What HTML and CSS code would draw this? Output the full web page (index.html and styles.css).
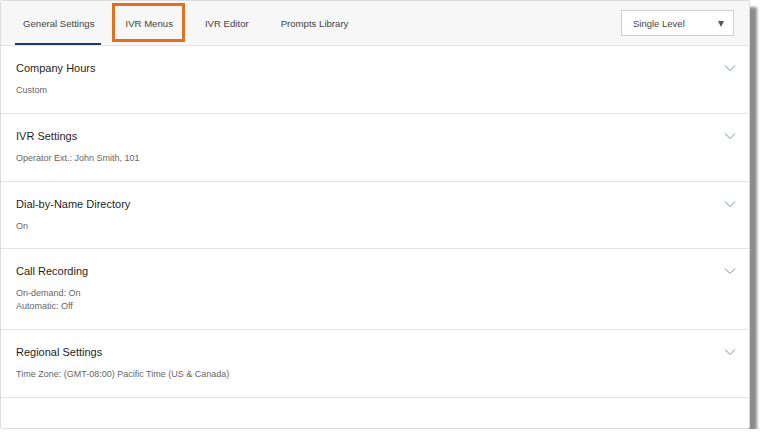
FILE: index.html
```html
<!DOCTYPE html>
<html>
<head>
<meta charset="utf-8">
<link rel="stylesheet" href="styles.css">
</head>
<body>
<div class="panel">
  <div class="header">
    <nav class="tabs">
      <div class="tab active">General Settings</div>
      <div class="tab highlighted">IVR Menus<span class="callout"></span></div>
      <div class="tab">IVR Editor</div>
      <div class="tab">Prompts Library</div>
    </nav>
    <div class="dropdown"><span>Single Level</span><span class="caret"></span></div>
  </div>
  <div class="section">
    <div class="info">
      <div class="title">Company Hours</div>
      <div class="line">Custom</div>
    </div>
    <svg class="chev" width="12" height="8" viewBox="0 0 12 8"><path d="M1 1.5 L6 6.5 L11 1.5" fill="none" stroke="#7d8aa6" stroke-width="1"/></svg>
  </div>
  <div class="section">
    <div class="info">
      <div class="title">IVR Settings</div>
      <div class="line">Operator Ext.: John Smith, 101</div>
    </div>
    <svg class="chev" width="12" height="8" viewBox="0 0 12 8"><path d="M1 1.5 L6 6.5 L11 1.5" fill="none" stroke="#7d8aa6" stroke-width="1"/></svg>
  </div>
  <div class="section">
    <div class="info">
      <div class="title">Dial-by-Name Directory</div>
      <div class="line">On</div>
    </div>
    <svg class="chev" width="12" height="8" viewBox="0 0 12 8"><path d="M1 1.5 L6 6.5 L11 1.5" fill="none" stroke="#7d8aa6" stroke-width="1"/></svg>
  </div>
  <div class="section">
    <div class="info">
      <div class="title">Call Recording</div>
      <div class="line">On-demand: On</div>
      <div class="line">Automatic: Off</div>
    </div>
    <svg class="chev" width="12" height="8" viewBox="0 0 12 8"><path d="M1 1.5 L6 6.5 L11 1.5" fill="none" stroke="#7d8aa6" stroke-width="1"/></svg>
  </div>
  <div class="section">
    <div class="info">
      <div class="title">Regional Settings</div>
      <div class="line">Time Zone: (GMT-08:00) Pacific Time (US &amp; Canada)</div>
    </div>
    <svg class="chev" width="12" height="8" viewBox="0 0 12 8"><path d="M1 1.5 L6 6.5 L11 1.5" fill="none" stroke="#7d8aa6" stroke-width="1"/></svg>
  </div>
</div>
</body>
</html>
```
FILE: styles.css
```css
html, body {
  margin: 0;
  padding: 0;
  background: #ffffff;
}
body {
  font-family: "Liberation Sans", Arial, sans-serif;
  color: #333;
}
.panel {
  width: 748px;
  height: 427px;
  border: 1px solid #dcdcdc;
  border-radius: 2px;
  background: #fff;
  box-shadow: 7px 7px 3px rgba(0, 0, 0, 0.45);
  display: flex;
  flex-direction: column;
}
.header {
  height: 44px;
  flex: none;
  background: #f7f7f7;
  border-bottom: 1px solid #e3e3e3;
  display: flex;
  align-items: center;
  justify-content: space-between;
  padding: 0 15px 0 6px;
}
.tabs {
  display: flex;
  height: 100%;
}
.tab {
  position: relative;
  margin: 0 8px;
  padding: 0 8px;
  display: flex;
  align-items: center;
  font-size: 9.6px;
  color: #444;
  box-sizing: border-box;
  height: 100%;
}
.tab.active {
  border-bottom: 2px solid #1f3a5a;
  padding-top: 2px;
  padding-right: 7px;
}
.callout {
  position: absolute;
  left: -5px;
  right: -4px;
  top: 2px;
  bottom: 3px;
  border: 3px solid #e3701c;
}
.dropdown {
  height: 24px;
  border: 1px solid #cfcfcf;
  background: #fff;
  display: flex;
  align-items: center;
  justify-content: space-between;
  padding: 0 8px 0 11px;
  width: 92px;
  font-size: 9.5px;
  color: #444;
}
.caret {
  width: 0;
  height: 0;
  border-left: 3.5px solid transparent;
  border-right: 3.5px solid transparent;
  border-top: 6px solid #555;
  margin-top: 1px;
  margin-right: 1px;
}
.section {
  display: flex;
  justify-content: space-between;
  align-items: flex-start;
  padding: 15px 13px 15.75px 15px;
  border-bottom: 1px solid #e3e3e3;
  flex: none;
}
.title {
  font-size: 11px;
  line-height: 14px;
  color: #1e1e1e;
  margin-bottom: 9px;
}
.line {
  font-size: 9px;
  line-height: 13px;
  color: #666;
}
.chev {
  display: block;
  margin-top: 3px;
}
```
